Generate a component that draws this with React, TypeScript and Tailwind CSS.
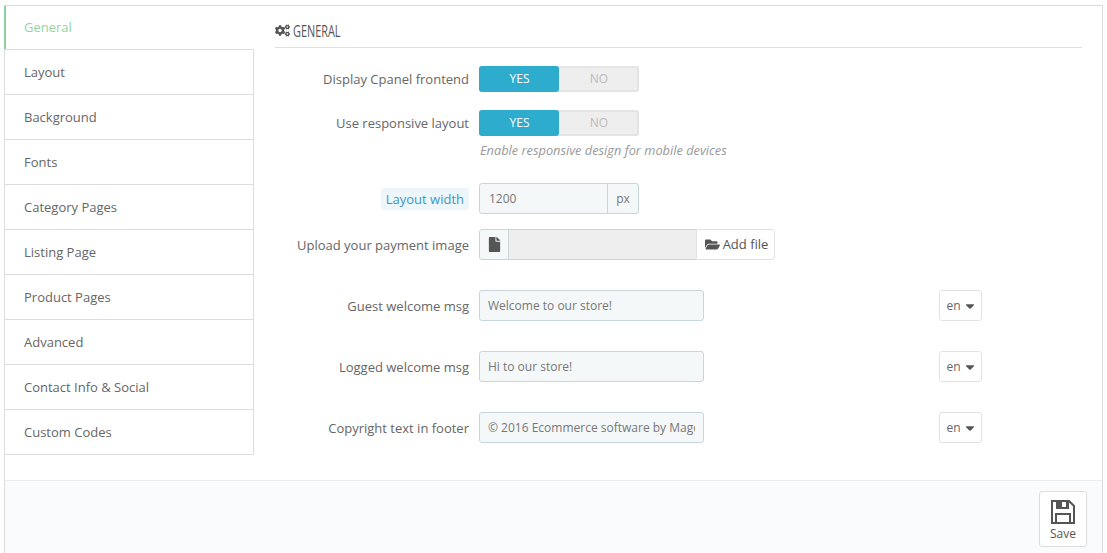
import { FaCaretDown, FaCogs, FaFile, FaFolderOpen } from "react-icons/fa";

const tabs = [
  "Layout",
  "Background",
  "Fonts",
  "Category Pages",
  "Listing Page",
  "Product Pages",
  "Advanced",
  "Contact Info & Social",
  "Custom Codes",
];

function Row({ label, className, children }: { label: React.ReactNode; className: string; children: React.ReactNode }) {
  return (
    <div className={`flex items-center ${className}`}>
      <div className="w-[194px] shrink-0 text-right text-[13px] leading-[18px] text-[#666]">{label}</div>
      <div className="ml-[10px] flex flex-1 items-center">{children}</div>
    </div>
  );
}

function Switch() {
  return (
    <div className="flex h-[26px] w-[160px] rounded-[3px] bg-[#eee] text-[12px] font-medium shadow-[inset_0_0_0_2px_#e4e4e4]">
      <div className="flex w-[80px] items-center justify-center rounded-[3px] bg-[#2eacce] pl-[1px] text-white">YES</div>
      <div className="flex w-[80px] items-center justify-center text-[#bbb]">NO</div>
    </div>
  );
}

function TextInput({ value }: { value: string }) {
  return (
    <div className="h-[31px] w-[225px] rounded-[3px] border border-[#c7d6db] bg-[#f5f8f9] px-[8px] text-[12px] leading-[29px] text-[#777]">
      <div className="overflow-hidden whitespace-nowrap">{value}</div>
    </div>
  );
}

function LangButton() {
  return (
    <div className="ml-[235px] flex h-[31px] w-[43px] items-center justify-center gap-[2px] rounded-[3px] border border-[#e2e2e2] bg-white pl-[2px] text-[12px] text-[#666]">
      en
      <FaCaretDown className="text-[14px] text-[#555]" />
    </div>
  );
}

function SaveIcon() {
  return (
    <svg width="24" height="24" viewBox="0 0 24 24" className="text-[#555]">
      <path fill="none" stroke="currentColor" strokeWidth="2" d="M1 1h17l5 5v17H1z" />
      <path fill="currentColor" d="M5 1h13v8H5z" />
      <path fill="#fff" d="M11 2h4v5h-4z" />
      <path fill="none" stroke="currentColor" strokeWidth="2" d="M5 23v-9h14v9" />
    </svg>
  );
}

export default function App() {
  return (
    <div className="h-[553px] w-[1107px] overflow-hidden bg-white pt-[5px] pr-[4px] pl-[4px] font-['Open_Sans',sans-serif]">
      <div className="h-[548px] border-t border-r border-l border-[#dcdcdc]">
        <div className="flex h-[474px]">
          <div className="w-[249px] shrink-0">
            <div className="-ml-px h-[43px] border-l-2 border-[#8fd19e] pt-[12px] pl-[18px] text-[13px] leading-[18px] text-[#93d3a2]">
              General
            </div>
            {tabs.map((tab) => (
              <div
                key={tab}
                className="-ml-px h-[45px] border-t border-r border-[#dcdcdc] pl-[20px] text-[13px] leading-[44px] text-[#666] last:h-[46px] last:border-b"
              >
                {tab}
              </div>
            ))}
          </div>

          <div className="flex-1 pr-[20px] pl-[21px]">
            <div className="flex h-[42px] items-center gap-[3px] border-b border-[#dfdfdf] pt-[8px] text-[#555]">
              <FaCogs className="text-[15px]" />
              <span className="inline-block origin-left scale-x-[0.68] text-[16px] text-[#555]">GENERAL</span>
            </div>

            <Row label="Display Cpanel frontend" className="mt-[18px]">
              <Switch />
            </Row>
            <Row label="Use responsive layout" className="mt-[18px]">
              <Switch />
            </Row>
            <div className="mt-[5px] ml-[205px] text-[12.8px] leading-[18px] text-[#999] italic">
              Enable responsive design for mobile devices
            </div>

            <Row
              label={<span className="rounded-[3px] bg-[#edf6fb] px-[5px] py-[2px] text-[#3c97c4]">Layout width</span>}
              className="mt-[24px]"
            >
              <div className="flex h-[31px] w-[160px] rounded-[3px] border border-[#c7d6db] bg-[#f5f8f9] text-[12px] text-[#777]">
                <div className="flex-1 pl-[9px] leading-[29px]">1200</div>
                <div className="w-[31px] border-l border-[#c7d6db] text-center leading-[29px]">px</div>
              </div>
            </Row>

            <Row label="Upload your payment image" className="mt-[15px]">
              <div className="flex h-[31px] w-[296px]">
                <div className="flex w-[30px] items-center justify-center rounded-l-[3px] border border-[#c7d6db] bg-[#f5f8f9]">
                  <FaFile className="text-[15px] text-[#555]" />
                </div>
                <div className="w-[187px] border-y border-[#c7d6db] bg-[#eee]" />
                <div className="flex flex-1 items-center justify-center gap-[3px] rounded-r-[3px] border border-[#e2e2e2] bg-white pl-[2px] text-[13px] text-[#555]">
                  <FaFolderOpen className="text-[15px]" />
                  Add file
                </div>
              </div>
            </Row>

            <Row label="Guest welcome msg" className="mt-[30px]">
              <TextInput value="Welcome to our store!" />
              <LangButton />
            </Row>
            <Row label="Logged welcome msg" className="mt-[30px]">
              <TextInput value="Hi to our store!" />
              <LangButton />
            </Row>
            <Row label="Copyright text in footer" className="mt-[30px]">
              <TextInput value="© 2016 Ecommerce software by Magento" />
              <LangButton />
            </Row>
          </div>
        </div>

        <div className="flex h-[73px] justify-end border-t border-[#eaedef] bg-[#fafbfc] pt-[10px] pr-[15px]">
          <div className="flex h-[56px] w-[48px] flex-col items-center rounded-[3px] border border-[#dedede] bg-white pt-[8px] text-[12px] leading-[16px] text-[#555]">
            <SaveIcon />
            <span className="mt-[2px]">Save</span>
          </div>
        </div>
      </div>
    </div>
  );
}
